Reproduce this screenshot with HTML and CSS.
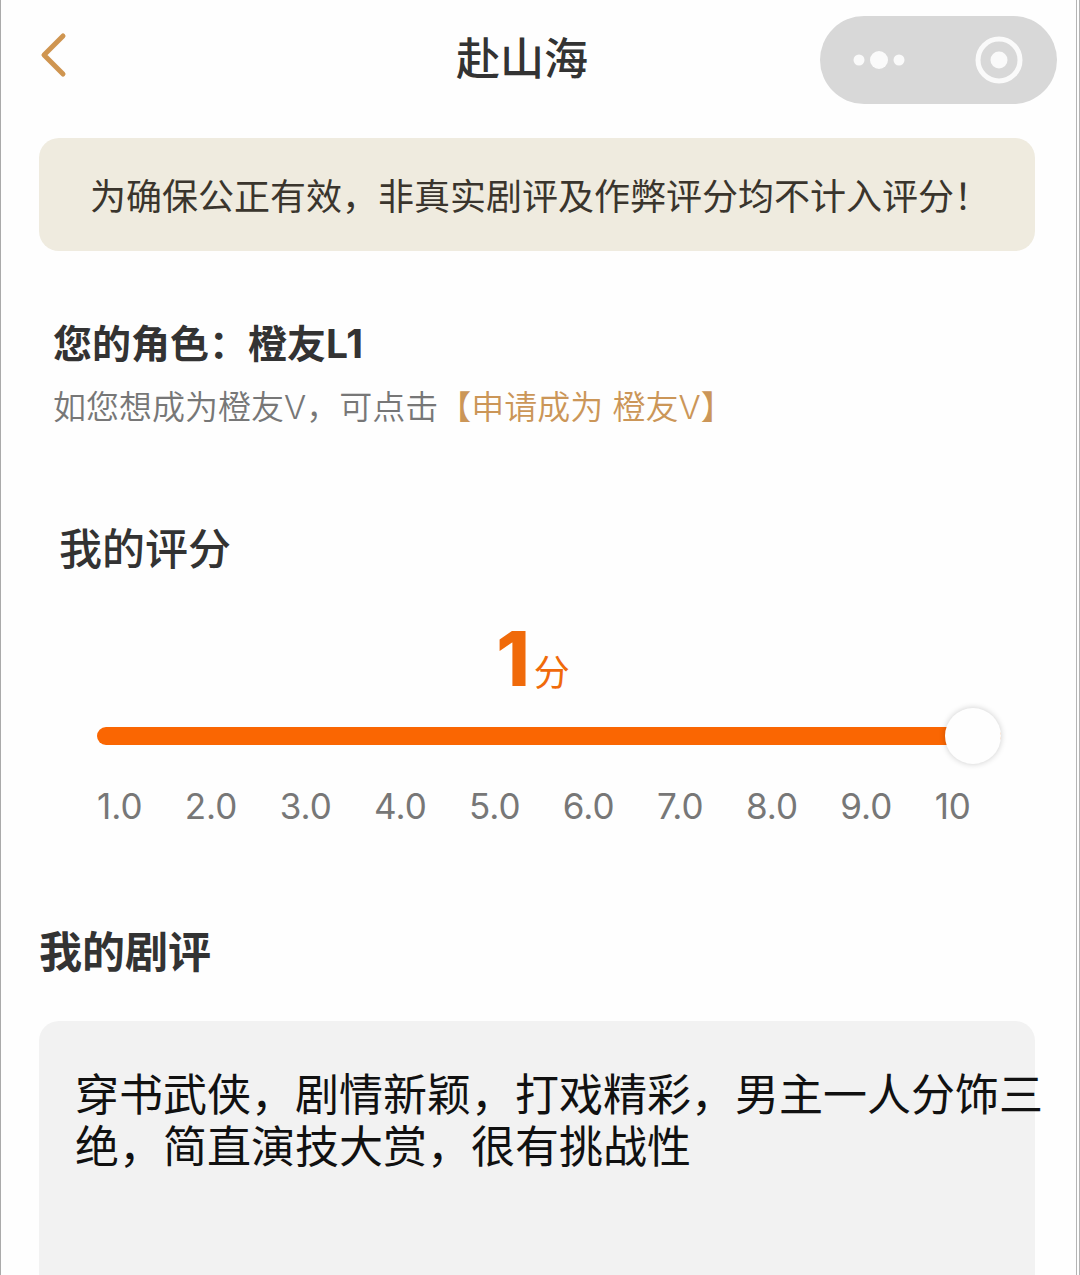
FILE: index.html
```html
<!DOCTYPE html>
<html lang="zh-CN">
<head>
    <meta charset="UTF-8">
    <meta name="viewport" content="width=device-width, initial-scale=1">
    <title>赴山海</title>
    <link rel="stylesheet" href="styles.css">
</head>
<body>

<div class="page">
    <header class="navbar">
        <button type="button" class="back" aria-label="返回">
            <svg width="28" height="48" viewBox="0 0 28 48">
                <path d="M24 5 L5 24 L24 43" fill="none" stroke="#cf9550" stroke-width="5" stroke-linecap="round" stroke-linejoin="round"/>
            </svg>
        </button>
        <h1 class="navbar-title">赴山海</h1>
        <div class="capsule">
            <button type="button" aria-label="更多">
                <svg width="54" height="20" viewBox="0 0 54 20">
                    <circle cx="7" cy="10" r="5.500"/>
                    <circle cx="27" cy="10" r="9"/>
                    <circle cx="47" cy="10" r="5.500"/>
                </svg>
            </button>
            <button type="button" aria-label="关闭">
                <svg width="48" height="48" viewBox="0 0 48 48">
                    <circle cx="24" cy="24" r="21" fill="none" stroke="#fafafa" stroke-width="5"/>
                    <circle cx="24" cy="24" r="8.500"/>
                </svg>
            </button>
        </div>
    </header>

    <main class="content">
        <p class="notice">为确保公正有效，非真实剧评及作弊评分均不计入评分！</p>

        <section class="role">
            <h2 class="role-name">您的角色：橙友L1</h2>
            <p class="role-tip">如您想成为橙友V，可点击<a href="#">【申请成为 橙友V】</a></p>
        </section>

        <section class="rating">
            <h2 class="rating-title"><label for="score">我的评分</label></h2>
            <div class="score"><span class="score-value">1</span><span class="score-unit">分</span></div>
            <input type="range" id="score" class="slider" name="score" min="1" max="10" step="1" value="10">
            <div class="scale">
                <span>1.0</span>
                <span>2.0</span>
                <span>3.0</span>
                <span>4.0</span>
                <span>5.0</span>
                <span>6.0</span>
                <span>7.0</span>
                <span>8.0</span>
                <span>9.0</span>
                <span>10</span>
            </div>
        </section>

        <section class="review">
            <h2 class="review-title"><label for="review">我的剧评</label></h2>
            <div class="review-box">
                <textarea id="review" name="review" spellcheck="false">穿书武侠，剧情新颖，打戏精彩，男主一人分饰三绝，简直演技大赏，很有挑战性</textarea>
            </div>
        </section>
    </main>
</div>

</body>
</html>
```
FILE: styles.css
```css
* {
    box-sizing: border-box;
}

body {
    margin: 0;
    background-color: #fefefe;
    color: #333;
    font-family: Inter, "Noto Sans CJK SC", sans-serif;
}

h1, h2, p {
    margin: 0;
}

button {
    display: flex;
    padding: 0;
    border: none;
    background: none;
    cursor: pointer;
}

.page {
    display: flex;
    flex-direction: column;
    min-height: 100vh;
    border-left: 1px solid #aaa;
    border-right: 4px double #b4b4b4;
}

/* top bar */
.navbar {
    display: grid;
    grid-template-columns: 8fr auto 9fr;
    align-items: center;
    padding: 16px 19px 0 38px;
}

.back {
    justify-self: start;
    padding-bottom: 10px;
}

.navbar-title {
    padding-bottom: 2px;
    font-size: 44px;
    font-weight: 500;
    line-height: 60px;
}

.capsule {
    display: flex;
    justify-content: space-between;
    align-items: center;
    justify-self: end;
    width: 237px;
    height: 88px;
    padding: 0 34px 0 32px;
    border-radius: 44px;
    background-color: #d8d8d8;
}

.capsule svg {
    fill: #fafafa;
}

.content {
    display: flex;
    flex: 1;
    flex-direction: column;
    padding: 34px 41px 0 38px;
}

.notice {
    padding: 31px 0 26px 51px;
    border-radius: 20px;
    background-color: #efebdf;
    color: #3a352d;
    font-size: 36px;
    line-height: 56px;
    white-space: nowrap;
}

/* role */
.role {
    margin-top: 65px;
    padding-left: 14px;
}

.role-name {
    font-size: 39px;
    font-weight: 700;
    line-height: 56px;
}

.role-tip {
    margin-top: 11px;
    color: #777;
    font-size: 33px;
    font-weight: 350;
    line-height: 48px;
}

.role-tip a {
    color: #cb9658;
    text-decoration: none;
}

/* rating */
.rating {
    margin-top: 88px;
}

.rating-title {
    padding-left: 20px;
    font-size: 43px;
    font-weight: 500;
    line-height: 60px;
}

.score {
    display: flex;
    justify-content: center;
    align-items: baseline;
    gap: 4px;
    margin-top: 39px;
    padding-right: 8px;
    color: #f06a0a;
}

.score-value {
    font-size: 76px;
    font-weight: 800;
    line-height: 80px;
}

.score-unit {
    font-size: 36px;
    line-height: 40px;
}

.slider {
    display: block;
    width: calc(100% - 92px);
    height: 56px;
    margin: 10px 34px 0 58px;
    background: none;
    appearance: none;
    -webkit-appearance: none;
}

.slider::-webkit-slider-runnable-track {
    height: 18px;
    border-radius: 9px;
    background-color: #fa6602;
}

.slider::-webkit-slider-thumb {
    width: 56px;
    height: 56px;
    margin-top: -19px;
    border-radius: 50%;
    background-color: #fefefe;
    box-shadow: 0 0 6px rgba(0, 0, 0, 0.2);
    appearance: none;
    -webkit-appearance: none;
}

.scale {
    display: flex;
    justify-content: space-between;
    margin-top: 20px;
    padding: 0 64px 0 58px;
    color: #777;
    font-size: 35px;
    line-height: 44px;
}

/* review */
.review {
    display: flex;
    flex: 1;
    flex-direction: column;
    margin-top: 94px;
}

.review-title {
    font-size: 43px;
    font-weight: 700;
    line-height: 60px;
}

.review-box {
    display: flex;
    flex: 1;
    margin-top: 39px;
    padding: 48px 0 0 36px;
    border-radius: 20px 20px 0 0;
    background-color: #f2f2f2;
}

/* the text runs a little past the edge of the box */
.review-box textarea {
    flex: 1;
    margin-right: -12px;
    padding: 0;
    border: none;
    outline: none;
    overflow: hidden;
    background: none;
    color: #111;
    font-family: inherit;
    font-size: 44px;
    line-height: 52px;
    resize: none;
}
```
